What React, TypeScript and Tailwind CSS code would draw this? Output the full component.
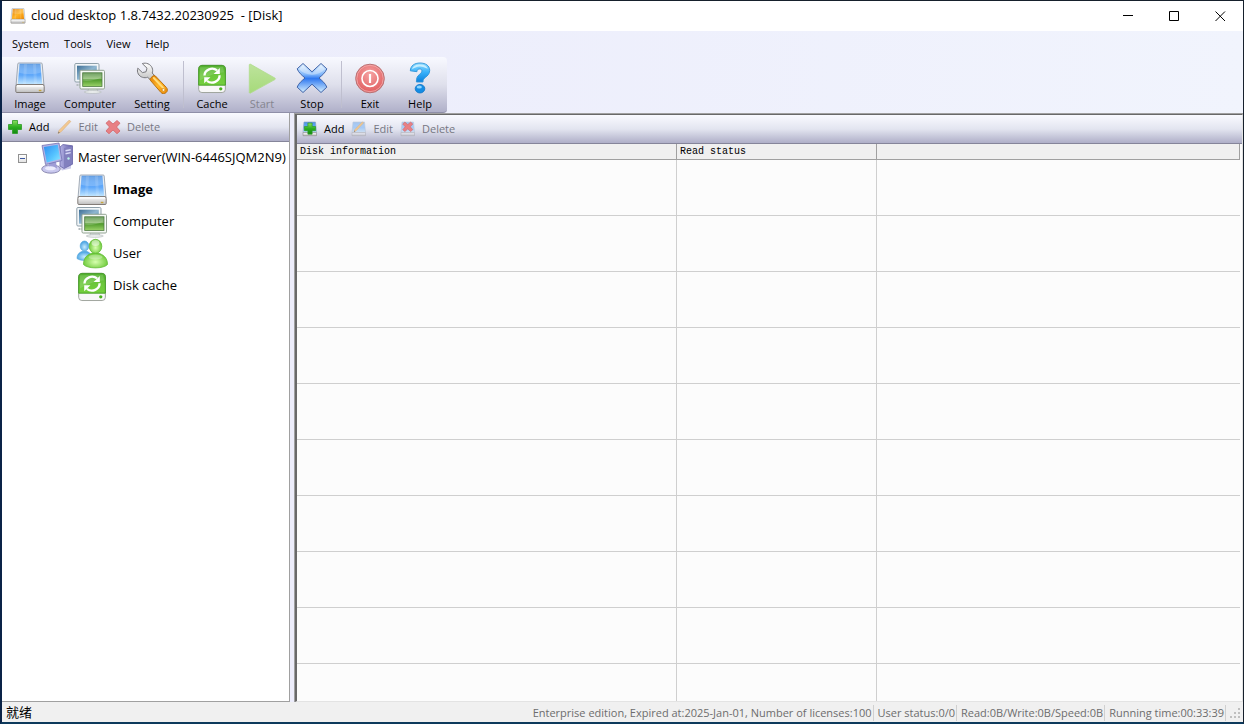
import type { ReactNode } from "react";

type IconProps = { size?: number; className?: string };

function Defs() {
  return (
    <svg width="0" height="0" className="absolute" aria-hidden="true">
      <defs>
        <linearGradient id="blue" x1="0" y1="0" x2="0" y2="1">
          <stop offset="0" stopColor="#4d90e0" />
          <stop offset="0.3" stopColor="#5ba4f6" />
          <stop offset="0.55" stopColor="#5fa8fa" />
          <stop offset="1" stopColor="#c4e8ff" />
        </linearGradient>
        <linearGradient id="orange" x1="0" y1="0" x2="1" y2="1">
          <stop offset="0" stopColor="#e07a00" />
          <stop offset="0.5" stopColor="#ffb428" />
          <stop offset="1" stopColor="#f08a00" />
        </linearGradient>
        <linearGradient id="silver" x1="0" y1="0" x2="0" y2="1">
          <stop offset="0" stopColor="#ffffff" />
          <stop offset="1" stopColor="#bdbdbd" />
        </linearGradient>
        <linearGradient id="screenBlue" x1="0" y1="0" x2="1" y2="1">
          <stop offset="0" stopColor="#3f6f96" />
          <stop offset="0.5" stopColor="#8fb6d0" />
          <stop offset="1" stopColor="#4e86a8" />
        </linearGradient>
        <linearGradient id="screenGreen" x1="0" y1="0" x2="0" y2="1">
          <stop offset="0" stopColor="#4d8a3c" />
          <stop offset="0.45" stopColor="#8fbf72" />
          <stop offset="0.5" stopColor="#4f9a2c" />
          <stop offset="1" stopColor="#9ad268" />
        </linearGradient>
        <linearGradient id="green" x1="0" y1="0" x2="0" y2="1">
          <stop offset="0" stopColor="#4fae2c" />
          <stop offset="0.5" stopColor="#6cc63c" />
          <stop offset="1" stopColor="#74d03c" />
        </linearGradient>
        <linearGradient id="play" x1="0" y1="0" x2="0" y2="1">
          <stop offset="0" stopColor="#bde39c" />
          <stop offset="1" stopColor="#a6da7a" />
        </linearGradient>
        <linearGradient id="cross" x1="0" y1="0" x2="0" y2="1">
          <stop offset="0" stopColor="#eaf6ff" />
          <stop offset="0.38" stopColor="#7fb6fa" />
          <stop offset="0.52" stopColor="#2f78f0" />
          <stop offset="1" stopColor="#d8f2ff" />
        </linearGradient>
        <radialGradient id="red" cx="0.5" cy="0.35" r="0.65">
          <stop offset="0" stopColor="#f5a2a2" />
          <stop offset="1" stopColor="#e05c5e" />
        </radialGradient>
        <linearGradient id="help" x1="0" y1="0" x2="0" y2="1">
          <stop offset="0" stopColor="#8fdcff" />
          <stop offset="0.5" stopColor="#38b0fa" />
          <stop offset="1" stopColor="#0c80dc" />
        </linearGradient>
        <linearGradient id="screen" x1="0" y1="0" x2="1" y2="1">
          <stop offset="0" stopColor="#2f8cf0" />
          <stop offset="0.6" stopColor="#56c4ff" />
          <stop offset="1" stopColor="#8ee6ff" />
        </linearGradient>
        <linearGradient id="lilac" x1="0" y1="0" x2="1" y2="0">
          <stop offset="0" stopColor="#b4b2e4" />
          <stop offset="1" stopColor="#5e5aa8" />
        </linearGradient>
        <radialGradient id="personGreen" cx="0.5" cy="0.6" r="0.6">
          <stop offset="0" stopColor="#d8ffb0" />
          <stop offset="1" stopColor="#62c42c" />
        </radialGradient>
        <radialGradient id="personBlue" cx="0.5" cy="0.6" r="0.6">
          <stop offset="0" stopColor="#c8ecff" />
          <stop offset="1" stopColor="#3c9ce0" />
        </radialGradient>
        <linearGradient id="plus" x1="0" y1="0" x2="0" y2="1">
          <stop offset="0" stopColor="#8ce060" />
          <stop offset="0.5" stopColor="#2cae20" />
          <stop offset="1" stopColor="#128a10" />
        </linearGradient>
      </defs>
    </svg>
  );
}

function Svg({ size = 32, box = 32, className = "", children }: IconProps & { box?: number; children: ReactNode }) {
  return (
    <svg width={size} height={size} viewBox={`0 0 ${box} ${box}`} className={`shrink-0 ${className}`} fill="none" aria-hidden="true">
      {children}
    </svg>
  );
}

function DriveIcon({ fill, ...p }: IconProps & { fill?: string }) {
  return (
    <Svg {...p}>
      <path d="M4.800 1h22.400c.6 0 1 .4 1 1L30 24H2L3.800 2c0-.6.400-1 1-1z" fill="#e8edf2" stroke="#8d98a6" strokeWidth=".8" />
      <path d="M5.600 1.800h20.800L28.200 22.500H3.800z" fill={fill ?? "url(#blue)"} />
      <path d="M5.600 2.200h20.800l.8 8.300C20 12.500 11 12.500 4.800 10.500z" fill="#fff" opacity=".18" />
      <path d="M11.500 2 10.500 22M20.500 2l1 20" stroke="#fff" strokeWidth="3" opacity=".13" />
      <path d="M2.600 22.500h26.800l.8 2v5c0 .6-.4 1-1 1H2.800c-.6 0-1-.4-1-1v-5z" fill="url(#silver)" stroke="#77716c" strokeWidth=".9" />
      <path d="M3 24h26" stroke="#fff" />
      <rect x="24.800" y="27.800" width="2.600" height="1.400" fill="#c8a53c" />
    </Svg>
  );
}

function ComputersIcon(p: IconProps) {
  return (
    <Svg {...p}>
      <path d="M2.500 23h5" stroke="#b5bcbf" strokeWidth="2" strokeDasharray="2 1" />
      <rect x="0.800" y="1.500" width="24.200" height="18.500" rx="1.200" fill="#f2f6f8" stroke="#8fa0aa" />
      <rect x="3" y="3.700" width="19.800" height="14" fill="url(#screenBlue)" />
      <path d="M15 26h7.500l1.500 4H13.500z" fill="#dfe4e4" stroke="#b3b9b9" strokeWidth=".7" />
      <ellipse cx="18.800" cy="30" rx="8.500" ry="1.300" fill="#f0f3f3" stroke="#a9b0b0" strokeWidth=".6" />
      <rect x="6" y="8.300" width="24.500" height="18.700" rx="1.200" fill="#f6faf6" stroke="#93a393" />
      <rect x="8.700" y="10.800" width="19.300" height="13.600" fill="url(#screenGreen)" stroke="#4f7a42" strokeWidth=".8" />
      <path d="M9.200 11.300h18.300v4c-6 3-12 4-18.300 3.500z" fill="#fff" opacity=".2" />
    </Svg>
  );
}

function SettingIcon(p: IconProps) {
  return (
    <Svg {...p}>
      <path
        d="M6.300 1.600c3.800-1.300 8.200.4 9.800 4.200.8 1.900.7 3.700.1 5.200l3.600 3.900-4.200 4.200-3.900-3.800C8.300 16.400 4.200 15.300 2.300 12 1.300 10.100 1.200 8 1.800 6.200l4.600 4.400 3.600-.8 1-3.600z"
        fill="url(#silver)"
        stroke="#77777c"
        strokeLinejoin="round"
      />
      <path d="M14.500 18.500c-.7-.9-.6-1.700.2-2.500l2.200-2c.9-.8 1.900-.7 2.600.1l10.800 11.300c1.500 1.700 1.400 3.800-.2 5.200-1.700 1.500-3.900 1.400-5.300-.3z" fill="url(#orange)" stroke="#b87314" />
      <path d="M17.800 16 28 26.800" stroke="#ffdc7a" strokeWidth="2" strokeLinecap="round" />
      <circle cx="27.500" cy="27.900" r="1.500" fill="#fff3cf" stroke="#c77c10" strokeWidth=".7" />
    </Svg>
  );
}

function CacheIcon(p: IconProps) {
  return (
    <Svg {...p}>
      <g transform="translate(1.300 2) scale(.92)">
        <rect x="1.500" y="1.500" width="29" height="29.500" rx="3.500" fill="#f8f8f8" stroke="#9a9f98" />
        <path d="M1.500 5c0-2 1.500-3.500 3.500-3.500h22c2 0 3.500 1.500 3.500 3.500V23h-29z" fill="url(#green)" stroke="#429a24" />
        <path d="M3 3.500 28 3l1 6C20 10 10 13 3 18z" fill="#fff" opacity=".14" />
        <path d="M7.800 12.500A8.300 7.600 0 0 1 21.500 7" stroke="#fff" strokeWidth="2.500" />
        <path d="M24.500 4.300v6.600h-6.800z" fill="#fff" />
        <path d="M24.200 12.300A8.300 7.600 0 0 1 10.500 18.300" stroke="#fff" strokeWidth="2.500" />
        <path d="M7.500 21v-6.600h6.800z" fill="#fff" />
        <circle cx="25.500" cy="27" r="1.800" fill="#46b21c" />
      </g>
    </Svg>
  );
}

function StartIcon(p: IconProps) {
  return (
    <Svg {...p}>
      <path d="M3.300 3c0-.8.600-1.100 1.300-.7L28.800 16c.7.400.7 1.200 0 1.600L4.600 31c-.7.400-1.300.1-1.300-.7z" fill="url(#play)" stroke="#b0dc8c" strokeWidth=".8" />
    </Svg>
  );
}

function StopIcon(p: IconProps) {
  return (
    <Svg {...p}>
      <path
        d="M7 1.500 16 9.800l9-8.300 5.800 5.300c-1.200 3.700-4.700 6.500-7.800 9.200 3.100 2.700 6.600 5.500 7.800 9.200L25 30.500l-9-8.300-9 8.300-5.800-5.300C2.400 21.500 5.900 18.700 9 16 5.900 13.300 2.400 10.500 1.200 6.800z"
        fill="url(#cross)"
        stroke="#3e62a8"
        strokeLinejoin="round"
      />
      <path d="m7 3.500 9 8 9-8 4 3.500c-6 7.500-20 7.500-26 0z" fill="#fff" opacity=".35" />
    </Svg>
  );
}

function ExitIcon(p: IconProps) {
  return (
    <Svg {...p}>
      <circle cx="16" cy="16.500" r="14.300" fill="url(#red)" stroke="#b87274" />
      <circle cx="16" cy="16.500" r="13.200" stroke="#f7b4b4" strokeWidth=".7" />
      <circle cx="16" cy="16.500" r="8" stroke="#fff" strokeWidth="1.600" />
      <path d="M16 12v9" stroke="#fff" strokeWidth="2.200" />
    </Svg>
  );
}

function HelpIcon(p: IconProps) {
  return (
    <Svg {...p}>
      <path
        d="M6.300 8.800C6.500 3.700 10.500 1 16 1c5.800 0 9.700 2.800 9.700 7.400 0 3.400-2 5.200-4.300 7-1.700 1.300-2.400 2.200-2.400 4.600h-6.600c-.1-4 .8-5.700 3-7.500 1.700-1.400 2.500-2.300 2.500-3.700 0-1.200-.9-1.800-2.200-1.800-1.700 0-2.700.9-2.800 2.700z"
        fill="url(#help)"
        stroke="#2f94d8"
        strokeWidth=".9"
      />
      <path d="M8 7.200C9 3.800 12.500 2.600 16 2.600c4 0 7 1.500 7.800 4.200-3-1.300-5-2.300-8-2.300S10.500 6 8 7.200z" fill="#d9f5ff" opacity=".8" />
      <ellipse cx="16" cy="26.700" rx="4.800" ry="4.300" fill="#148ce4" stroke="#0f74c4" strokeWidth=".8" />
      <ellipse cx="15.300" cy="25" rx="2.600" ry="1.500" fill="#8fd6ff" />
    </Svg>
  );
}

function ServerIcon(p: IconProps) {
  return (
    <Svg {...p}>
      <path d="M17 23.500h10l3-1v4l-9 2z" fill="#b8b6e2" opacity=".7" />
      <path d="M19 5 22 2.500l9.500 1.300v18.400L23 26.500 19 24z" fill="url(#lilac)" stroke="#6a66a8" strokeWidth=".8" />
      <path d="M23 6 31.200 4.200v17.500L23 26z" fill="#8280be" />
      <path d="m24.500 8.800 5.200-1.100M24.500 11.800l5.200-1.200" stroke="#dadaf8" strokeWidth="1.400" />
      <circle cx="27.500" cy="16.500" r="1.200" fill="#b9f0e8" />
      <ellipse cx="10" cy="27" rx="9.300" ry="4.200" fill="#c9c8ee" stroke="#76739f" strokeWidth=".8" />
      <path d="M8 20h7l1 6c-3 1.800-6 1.800-8 0z" fill="#9f9dd6" />
      <ellipse cx="9.500" cy="26.300" rx="5.500" ry="2" fill="#ececfc" />
      <path d="M1 3.500 18 1l3 17.500L4.500 22.500z" fill="#b4b4e6" stroke="#7472b2" strokeWidth=".8" />
      <path d="m2.800 5 13.900-2.200 2.400 14.300-13.300 3.300z" fill="url(#screen)" />
    </Svg>
  );
}

function UserIcon(p: IconProps) {
  return (
    <Svg {...p}>
      <path d="M1 20.500c0-4 2-6 5.500-7.200h4C14 14.500 16 17 16 21c-3 2-12 2-15-.5z" fill="url(#personBlue)" stroke="#58a8dc" strokeWidth=".7" />
      <ellipse cx="8.500" cy="8" rx="4.300" ry="5" fill="url(#personBlue)" stroke="#58a8dc" strokeWidth=".7" />
      <path d="M7.500 26.500c0-7 4-10 9-11.500h5.500c5 1.500 9.500 4.500 9.500 11.500-4 4.500-20 4.500-24 0z" fill="url(#personGreen)" stroke="#64bc38" strokeWidth=".8" />
      <ellipse cx="19.500" cy="8.300" rx="6.300" ry="7" fill="url(#personGreen)" stroke="#64bc38" strokeWidth=".8" />
      <ellipse cx="19.500" cy="5" rx="4" ry="3" fill="#fff" opacity=".5" />
      <ellipse cx="19.500" cy="19" rx="7" ry="2.500" fill="#fff" opacity=".3" />
    </Svg>
  );
}

function PlusShape() {
  return <path d="M5.500 1.500h5v4h4v5h-4v4h-5v-4h-4v-5h4z" fill="url(#plus)" stroke="#2c9a24" strokeWidth=".8" strokeLinejoin="round" />;
}

function PencilShape() {
  return (
    <>
      <path d="m13 1.200 1.900 1.200L5.200 12.700 2 14.500l1.200-3.300z" fill="#f3c890" stroke="#d8b080" strokeWidth=".6" />
      <path d="m2 14.500.6-2 1.200 1.200z" fill="#77716c" />
    </>
  );
}

function CrossShape() {
  return (
    <path
      d="M4 1.500 8 5l4-3.500 3 2.700L11.500 8l3.500 4-3 2.700L8 11l-4 3.700-3-2.700L4.500 8 1 4.200z"
      fill="#e88084"
      stroke="#d0666a"
      strokeWidth=".8"
      strokeLinejoin="round"
    />
  );
}

function SmallDrive({ faded }: { faded?: boolean }) {
  return (
    <g opacity={faded ? 0.45 : 1}>
      <path d="M2 1h11.500l1 10.500H1z" fill="url(#blue)" stroke="#8ba2bb" strokeWidth=".6" />
      <path d="M1 11.500h13.500v3.200H1z" fill="url(#silver)" stroke="#8a8a8a" strokeWidth=".6" />
    </g>
  );
}

type Action = { label: string; disabled?: boolean; icon: ReactNode };

const treeActions: Action[] = [
  { label: "Add", icon: <Svg size={16} box={16}><PlusShape /></Svg> },
  { label: "Edit", disabled: true, icon: <Svg size={16} box={16}><path d="M1.500 15h13" stroke="#cfd0da" /><PencilShape /></Svg> },
  { label: "Delete", disabled: true, icon: <Svg size={16} box={16}><CrossShape /></Svg> },
];

const diskActions: Action[] = [
  { label: "Add", icon: <Svg size={16} box={16}><SmallDrive /><g transform="translate(1.200 .8) scale(.85)"><PlusShape /></g></Svg> },
  { label: "Edit", disabled: true, icon: <Svg size={16} box={16}><SmallDrive faded /><g transform="translate(1.500 0) scale(.75)"><PencilShape /></g></Svg> },
  { label: "Delete", disabled: true, icon: <Svg size={16} box={16}><SmallDrive faded /><g transform="translate(2 0) scale(.72)"><CrossShape /></g></Svg> },
];

function ActionBar({ actions, label }: { actions: Action[]; label: string }) {
  return (
    <div role="toolbar" aria-label={label} className="flex h-[29px] shrink-0 items-center gap-[7px] border-b border-[#85859a] bg-linear-to-b from-[#f9faff] via-[#e3e5f0] to-[#afafc8] pl-[5px] text-[11px]">
      {actions.map((a) => (
        <button key={a.label} type="button" disabled={a.disabled} className="flex items-center gap-[6px] text-black disabled:text-[#777783]">
          {a.icon}
          {a.label}
        </button>
      ))}
    </div>
  );
}

type Tool = { label: string; icon: ReactNode; width: string; disabled?: boolean; separated?: boolean };

const tools: Tool[] = [
  { label: "Image", icon: <DriveIcon />, width: "w-[50px]" },
  { label: "Computer", icon: <ComputersIcon />, width: "w-[70px]" },
  { label: "Setting", icon: <SettingIcon />, width: "w-[54px]" },
  { label: "Cache", icon: <CacheIcon />, width: "w-[50px]", separated: true },
  { label: "Start", icon: <StartIcon />, width: "w-[50px]", disabled: true },
  { label: "Stop", icon: <StopIcon />, width: "w-[50px]" },
  { label: "Exit", icon: <ExitIcon />, width: "w-[50px]", separated: true },
  { label: "Help", icon: <HelpIcon />, width: "w-[50px]" },
];

const treeItems = [
  { label: "Image", icon: <DriveIcon />, active: true },
  { label: "Computer", icon: <ComputersIcon /> },
  { label: "User", icon: <UserIcon /> },
  { label: "Disk cache", icon: <CacheIcon /> },
];

const statusItems = [
  "Enterprise edition, Expired at:2025-Jan-01, Number of licenses:100",
  "User status:0/0",
  "Read:0B/Write:0B/Speed:0B",
  "Running time:00:33:39",
];

function TitleBar() {
  return (
    <header className="flex h-[30px] shrink-0 items-center bg-white">
      <div className="flex flex-1 items-center gap-[5px] pl-2">
        <DriveIcon size={16} fill="url(#orange)" />
        <h1 className="text-[13px] whitespace-pre">{"cloud desktop 1.8.7432.20230925  - [Disk]"}</h1>
      </div>
      <button type="button" aria-label="Minimize" className="flex h-full w-[46px] items-center justify-center">
        <svg width="11" height="11" stroke="#000"><path d="M0 4.500h10" /></svg>
      </button>
      <button type="button" aria-label="Maximize" className="flex h-full w-[46px] items-center justify-center">
        <svg width="11" height="11" stroke="#000" fill="none"><path d="M.5.500h9v9h-9z" /></svg>
      </button>
      <button type="button" aria-label="Close" className="flex h-full w-[46px] items-center justify-center">
        <svg width="11" height="11" stroke="#000"><path d="m.5.500 9.500 9.500m0-9.500-9.500 9.500" /></svg>
      </button>
    </header>
  );
}

export default function App() {
  return (
    <div className="flex h-screen flex-col overflow-hidden border-t border-r border-b-2 border-l-2 border-t-[#16202c] border-r-[#16202c] border-b-[#0d3a5c] border-l-[#0a2347] bg-[#ededfb] font-['Open_Sans','Noto_Sans_CJK_SC',sans-serif] text-black">
      <Defs />
      <TitleBar />
      <div className="shrink-0 bg-linear-to-r from-[#ebebfb] to-[#f1f4fd]">
        <nav aria-label="Main menu" className="flex h-[26px] items-center gap-[15px] pl-[10px] text-[11px]">
          {["System", "Tools", "View", "Help"].map((m) => (
            <button key={m} type="button">{m}</button>
          ))}
        </nav>
        <div role="toolbar" aria-label="Main toolbar" className="flex h-14 w-fit rounded-r-sm border-b border-[#8f8fa8] bg-linear-to-b from-[#f8f9ff] via-[#dfe0ec] to-[#b0b0c9] pr-[2px] pl-[3px] text-[11px]">
          {tools.map((t) => (
            <div key={t.label} className="flex">
              {t.separated && <span className="mt-1 mr-[3px] mb-1 ml-1 w-px bg-[#bfbfcf]" />}
              <button type="button" disabled={t.disabled} className={`flex flex-col items-center pt-[5px] leading-5 disabled:text-[#85858f] ${t.width}`}>
                {t.icon}
                {t.label}
              </button>
            </div>
          ))}
        </div>
      </div>

      <main className="flex min-h-0 flex-1 gap-1">
        <aside className="flex w-[288px] shrink-0 flex-col border-r border-b border-[#a0a0a0] bg-white">
          <ActionBar actions={treeActions} label="Server actions" />
          <ul className="text-[13px]">
            <li>
              <div className="flex h-8 items-center pl-4">
                <button type="button" aria-label="Collapse" className="flex size-[9px] items-center justify-center border border-[#919191] bg-linear-to-b from-white to-[#e4e4e4]">
                  <span className="h-px w-[5px] bg-[#3b57a0]" />
                </button>
                <ServerIcon className="mr-[5px] ml-[14px]" />
                <span className="whitespace-nowrap">Master server(WIN-6446SJQM2N9)</span>
              </div>
              <ul className="pl-[74px]">
                {treeItems.map((item) => (
                  <li key={item.label}>
                    <button type="button" className={`flex h-8 items-center gap-[5px] ${item.active ? "font-bold" : ""}`}>
                      {item.icon}
                      {item.label}
                    </button>
                  </li>
                ))}
              </ul>
            </li>
          </ul>
        </aside>

        <section className="flex min-w-0 flex-1 border-t border-l border-[#a0a0a0]">
          <div className="flex min-w-0 flex-1 flex-col overflow-hidden border-t border-r border-b border-l-2 border-t-[#696969] border-r-[#e3e3e3] border-b-[#e3e3e3] border-l-[#696969] bg-[#fcfcfc]">
            <ActionBar actions={diskActions} label="Disk actions" />
            <div className="min-h-0 flex-1 overflow-hidden pr-[2px]">
              <table className="w-full table-fixed border-separate border-spacing-0 text-left font-['Liberation_Mono',monospace] text-[10px]">
                <thead>
                  <tr className="h-4 bg-[#f0f0f0] leading-[15px]">
                    <th className="w-[380px] border-r border-b border-[#a0a0a0] px-[3px] py-0 font-normal">Disk information</th>
                    <th className="w-[200px] border-r border-b border-[#a0a0a0] px-[3px] py-0 font-normal">Read status</th>
                    <th className="border-r border-b border-[#a0a0a0] p-0" aria-label="Details" />
                  </tr>
                </thead>
                <tbody>
                  {Array.from({ length: 10 }, (_, i) => (
                    <tr key={i} className="h-14">
                      <td className="border-r border-b border-[#cfcfcf]" />
                      <td className="border-r border-b border-[#cfcfcf]" />
                      <td className="border-b border-[#cfcfcf]" />
                    </tr>
                  ))}
                </tbody>
              </table>
            </div>
          </div>
        </section>
      </main>

      <footer className="flex h-5 shrink-0 items-center justify-between bg-[#f0f0f0] pr-[2px] pl-1 text-[11px]">
        <span className="text-[13px] leading-[18px]">就绪</span>
        <div className="flex items-center pt-px text-[#6d6d6d]">
          {statusItems.map((s) => (
            <span key={s} className="mr-1 border-r border-[#d0d0d0] pr-px leading-4">{s}</span>
          ))}
          <svg width="11" height="11" fill="#bfbfbf" aria-hidden="true">
            <path d="M8 1h2v2H8zM4 5h2v2H4zM8 5h2v2H8zM0 9h2v2H0zM4 9h2v2H4zM8 9h2v2H8z" />
          </svg>
        </div>
      </footer>
    </div>
  );
}
